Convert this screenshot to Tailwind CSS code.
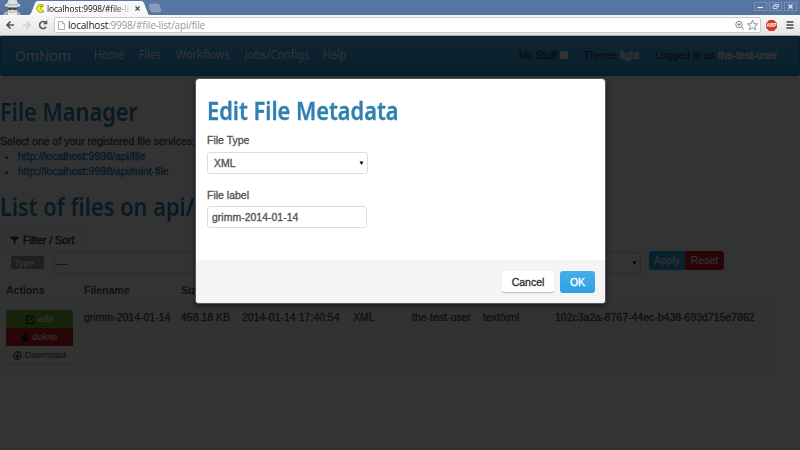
<!DOCTYPE html>
<html lang="en">
<head>
<meta charset="utf-8">
<title>File Manager</title>
<script src="https://cdn.jsdelivr.net/npm/@tailwindcss/browser@4"></script>
</head>
<body class="w-[800px] h-[450px] overflow-hidden bg-white font-['Liberation_Sans',sans-serif] text-[10.5px] leading-[15px] text-[#555]">
<div class="h-full flex flex-col">
  <!-- browser chrome -->
  <header class="h-[36px] shrink-0 flex flex-col bg-linear-to-b from-[#5878a3] to-[#4f6d98]">
    <div class="h-[15px] flex items-stretch shrink-0">
      <svg class="w-[29px] h-[15px] shrink-0" viewBox="0 0 29 15"><path d="M3 15 Q4 11.500 8 11 L17 11 Q20 11.500 21 15Z" fill="#a9afb7"/><path d="M8 2 Q8-1 10 0 L15 0 Q17-1 17.500 3 L20 4.500 Q21 6 19 6.500 Q13 8 6 6.500 Q4 6 5.500 4.500Z" fill="#dcdfe2"/><path d="M7 4.300 Q12 6 18 4.300" fill="none" stroke="#a6abb3"/><path d="M8 7 H17 V11 Q12.500 15 8 11Z" fill="#cfd2d6"/><path d="M7.500 7.500H17.500L16.500 10H13.500L12.500 9L11.500 10H8.500Z" fill="#444"/><path d="M8 12 L12.500 13.500 L17 12 V15 H8Z" fill="#ececec"/></svg>
      <div class="relative w-[120px] h-[15px] shrink-0">
        <svg class="absolute inset-0" width="120" height="15" viewBox="0 0 120 15"><path d="M0 15 Q2 14 3 11 L6 3 Q7 1 9 1 H112 Q114 1 115 3 L118 11 Q119 14 120 15Z" fill="#f8f8f8"/></svg>
        <div class="relative flex items-center h-[15px] pl-[7px] pt-[2px]">
          <svg class="w-[9px] h-[9px] shrink-0" viewBox="0 0 9 9"><path d="M8 1.500 A4.200 4.200 0 1 0 8 7.500 L4.500 4.500Z" fill="#f7ee12" stroke="#85800c" stroke-width=".7"/><circle cx="5" cy="2.300" r=".6" fill="#222"/></svg>
          <span class="ml-[2px] w-[84px] overflow-hidden whitespace-nowrap font-['Open_Sans',sans-serif] text-[8.4px] leading-[11px] tracking-[-0.1px] text-[#111] mask-r-from-80%">localhost:9998/#file-lis</span>
          <svg class="w-[5px] h-[5px] ml-[4px]" viewBox="0 0 5 5"><path d="M.5 .5 L4.500 4.500 M4.500 .5 L.5 4.500" stroke="#444" stroke-width="1.100"/></svg>
        </div>
      </div>
      <svg class="w-[16px] h-[15px]" viewBox="0 0 16 15"><path d="M1 4 H9 Q11 4 11.500 5.500 L13 10.500 Q13 12 11.500 12 H5 Q3 12 2.500 10.500 L0 5Z" transform="translate(-1)" fill="#8599b8" stroke="#a0afc7" stroke-width=".5"/></svg>
      <div class="ml-auto flex gap-[2px] pt-[2px] pr-[3px]">
        <svg width="13" height="9" viewBox="0 0 13 9"><rect x=".5" y=".5" width="12" height="8" fill="none" stroke="#7690b4"/><path d="M3.500 5.500H9" stroke="#eee" stroke-width="1.300"/></svg>
        <svg width="13" height="9" viewBox="0 0 13 9"><rect x=".5" y=".5" width="12" height="8" fill="none" stroke="#7690b4"/><path d="M5.500 4V2.500H9.500V5H8M4 4H8V6.500H4Z" stroke="#e4e8ef" stroke-width=".8" fill="none"/></svg>
        <svg width="13" height="9" viewBox="0 0 13 9"><rect x=".5" y=".5" width="12" height="8" fill="none" stroke="#7690b4"/><path d="M4.500 2.500L8.500 6.500M8.500 2.500L4.500 6.500" stroke="#eee" stroke-width="1.200"/></svg>
      </div>
    </div>
    <div class="h-[21px] flex items-center bg-linear-to-b from-[#f8f8f8] to-[#e4e4e4] border-b border-[#a5a8aa]">
      <svg class="w-[54px] h-[20px] shrink-0" viewBox="0 0 54 20"><path d="M14 10H7.500M10.500 6.500L7 10L10.500 13.500" fill="none" stroke="#555" stroke-width="1.700"/><path d="M23 10H29.500M26.500 6.500L30 10L26.500 13.500" fill="none" stroke="#d2d2d2" stroke-width="1.700"/><path d="M46 12A3.500 3.500 0 1 1 45.500 7.500" fill="none" stroke="#555" stroke-width="1.600"/><path d="M47.300 5V9.300H43Z" fill="#555"/></svg>
      <div class="w-[707px] h-[16px] flex items-center bg-white border border-[#cbcbcb] rounded-[2px] pl-[3px]">
        <svg width="7" height="9" viewBox="0 0 7 9"><path d="M.5 .5H4.300L6.500 2.700V8.500H.5ZM4.300 .5V2.700H6.500" fill="#fafafa" stroke="#999" stroke-width=".8"/></svg>
        <span class="ml-[3px] font-['Open_Sans',sans-serif] text-[10px] leading-[13px] tracking-[-0.2px] text-[#999] whitespace-nowrap"><span class="text-[#222]">localhost</span>:9998/#file-list/api/file</span>
        <svg class="ml-auto" width="26" height="12" viewBox="0 0 26 12"><circle cx="5" cy="5.500" r="3.200" fill="none" stroke="#777" stroke-width=".9"/><path d="M3.500 5.500H6.500M5 4V7M7.500 8L9.500 10.500" stroke="#777" stroke-width="1"/><path d="M18.500 1.200L19.900 4.700L23.500 4.900L20.700 7.200L21.700 10.800L18.500 8.800L15.300 10.800L16.300 7.200L13.500 4.900L17.100 4.700Z" fill="#fff" stroke="#777" stroke-width=".8"/></svg>
      </div>
      <svg class="ml-[5px]" width="11" height="11" viewBox="0 0 11 11"><path d="M3.200 0H7.800L11 3.200V7.800L7.800 11H3.200L0 7.800V3.200Z" fill="#d23a20"/><text x="5.500" y="7.400" text-anchor="middle" font-family="Liberation Sans" font-weight="bold" font-size="4.700" fill="#fff">ABP</text></svg>
      <svg class="ml-[9px]" width="8" height="10" viewBox="0 0 8 10"><path d="M.5 2H7.500M.5 5H7.500M.5 8H7.500" stroke="#444" stroke-width="1.600"/></svg>
    </div>
  </header>

  <!-- page -->
  <div class="relative flex-1">
    <nav class="h-[40px] flex items-center bg-linear-to-b from-[#54b4eb] to-[#1d9ce5] border border-[#1990d5] rounded-[3px] pl-[14px] pr-[22px] pb-[2px] text-white font-['Noto_Sans',sans-serif] text-[12px]">
      <span class="w-[79px] text-[15px] leading-[18px] pb-[1px] scale-x-[.93] origin-left">OmNom</span>
      <span class="w-[45px] pb-[1px] scale-x-[.89] origin-left">Home</span>
      <span class="w-[37px] pb-[1px] scale-x-[.89] origin-left">Files</span>
      <span class="w-[69px] pb-[1px] scale-x-[.91] origin-left">Workflows</span>
      <span class="w-[78px] pb-[1px] scale-x-[.91] origin-left">Jobs/Configs</span>
      <span class="pb-[1px] scale-x-[.89] origin-left">Help</span>
      <div class="ml-auto flex gap-[16px] font-['Liberation_Sans',sans-serif] text-[10.5px] text-[#333] [-webkit-text-stroke:0.2px]">
        <span class="flex items-center">My Stuff<i class="w-[8px] h-[8px] ml-[3px] bg-white rounded-[1px]"></i></span>
        <span>Theme <span class="text-white [-webkit-text-stroke:0.5px]">light</span></span>
        <span>Logged in as <span class="text-white [-webkit-text-stroke:0.5px]">the-test-user</span></span>
      </div>
    </nav>
    <h1 class="mt-[19px] h-[32px] leading-[32px] font-['Noto_Sans',sans-serif] font-semibold text-[25px] text-[#2f80b0] whitespace-nowrap"><span class="inline-block scale-x-[.872] origin-left">File Manager</span></h1>
    <p class="mt-[7px] [-webkit-text-stroke:0.35px]">Select one of your registered file services:</p>
    <ul class="list-disc pl-[18px] text-[#2f80b0] marker:text-[#555] [-webkit-text-stroke:0.35px]"><li>http://localhost:9998/api/file</li><li>http://localhost:9998/api/mint-file</li></ul>
    <h1 class="mt-[11px] h-[32px] leading-[32px] font-['Noto_Sans',sans-serif] font-semibold text-[25px] text-[#2f80b0] whitespace-nowrap"><span class="inline-block scale-x-[.872] origin-left">List of files on api/</span></h1>
    <div class="mt-[7px] ml-[1px] w-[82px] h-[22px] flex items-center gap-[4px] pl-[8px] border border-[#e4e4e4] rounded-[3px] text-[#333]">
      <svg width="9" height="9" viewBox="0 0 9 9"><path d="M0.500 .5H8.500V2L5.500 4.500V8.500L3.500 7V4.500L.5 2Z" fill="#444"/></svg>
      <span class="pt-[1px] [-webkit-text-stroke:0.4px] whitespace-nowrap">Filter / Sort</span>
    </div>
    <div class="flex h-[24px]">
      <div class="w-[33px] h-[13px] mt-[5px] ml-[11px] bg-[#999] rounded-[2px] text-white text-[9px] leading-[14px] font-bold pl-[3px]">Type</div>
      <div class="ml-[10px] mt-[1px] w-[587px] h-[22px] flex items-center border border-[#ccc] rounded-[3px] px-[2px] text-[#555] [-webkit-text-stroke:0.4px]">—<svg class="ml-auto mr-[1px]" width="5" height="5" viewBox="0 0 5 5"><path d="M.5 .5H4.500L2.500 4Z" fill="#000"/></svg></div>
      <div class="flex ml-[8px] h-[19px] rounded-[3px] overflow-hidden text-white leading-[19px] text-center"><span class="w-[36px] bg-[#2fa4e7]">Apply</span><span class="w-[39px] bg-[#c71c22]">Reset</span></div>
    </div>
    <div class="w-[772px]">
      <div class="flex h-[28px] pt-[8px] pl-[6px] font-bold text-[#555]"><span class="w-[78px]">Actions</span><span class="w-[97px]">Filename</span><span>Size</span></div>
      <div class="flex h-[66px] bg-[#f9f9f9] border-t border-r border-[#e4e4e4] pt-[6px] pl-[6px] [-webkit-text-stroke:0.35px]">
        <div class="w-[67px] h-[55px] mr-[11px] rounded-[3px] overflow-hidden border-b border-[#ccc] text-white text-[9.3px] [-webkit-text-stroke:0.1px]">
          <div class="h-[18px] flex items-center justify-center gap-[3px] bg-[#73a839]"><svg width="9" height="9" viewBox="0 0 9 9"><path d="M5 1H1.500Q.5 1 .5 2V7.500Q.5 8.500 1.500 8.500H7Q8 8.500 8 7.500V5.500M3.500 5.500L8 1" stroke="#222" stroke-width="1.300" fill="none"/></svg>edit</div>
          <div class="h-[18px] flex items-center justify-center gap-[3px] bg-[#c71c22]"><svg width="8" height="9" viewBox="0 0 8 9"><path d="M0 1.500H2.500V0H5.500V1.500H8V2.500H0ZM.8 3H7.200V9H.8Z" fill="#222"/></svg>delete</div>
          <div class="h-[18px] flex items-center justify-center gap-[3px] bg-white text-[#555]"><svg width="9" height="9" viewBox="0 0 9 9"><circle cx="4.500" cy="4.500" r="3.800" fill="none" stroke="#333" stroke-width="1.100"/><path d="M4.500 2V6M2.500 4.500L4.500 6.700L6.500 4.500" stroke="#333" stroke-width="1.200" fill="none"/></svg>Download</div>
        </div>
        <span class="w-[97px]">grimm-2014-01-14</span><span class="w-[61px]">458.18 KB</span><span class="w-[111px]">2014-01-14 17:40:54</span><span class="w-[59px]">XML</span><span class="w-[71px]">the-test-user</span><span class="w-[72px]">text/xml</span><span>102c3a2a-8767-44ec-b438-693d715e7862</span>
      </div>
    </div>
    <div class="absolute inset-0 bg-black/80"></div>
  </div>
</div>

<!-- dialog -->
<section class="absolute left-[195px] top-[78px] w-[411px] h-[226px] flex flex-col overflow-hidden rounded-[4px] bg-white border border-[#555] shadow-[0_2px_5px_rgba(0,0,0,.5)] [-webkit-text-stroke:0.35px]">
  <div class="flex-1 pl-[11px] pt-[15px]">
    <h1 class="h-[32px] leading-[32px] font-['Noto_Sans',sans-serif] font-semibold text-[25px] text-[#2f80b0] whitespace-nowrap"><span class="inline-block scale-x-[.872] origin-left">Edit File Metadata</span></h1>
    <p class="mt-[7px]">File Type</p>
    <div class="mt-[4px] w-[161px] h-[22px] flex items-center border border-[#ddd] rounded-[3px] pl-[6px] pr-[3px]">XML<svg class="ml-auto" width="5" height="5" viewBox="0 0 5 5"><path d="M.5 .5H4.500L2.500 4Z" fill="#000"/></svg></div>
    <p class="mt-[14px]">File label</p>
    <div class="mt-[3px] w-[160px] h-[22px] flex items-center border border-[#ddd] rounded-[3px] pl-[4px]">grimm-2014-01-14</div>
  </div>
  <footer class="h-[43px] bg-[#f4f4f4] flex justify-end gap-[6px] pt-[11px] pr-[10px] text-center leading-[22px]">
    <span class="w-[52px] h-[21px] bg-white rounded-[2px] shadow-[0_1px_1px_#bbb] text-[#333]">Cancel</span>
    <span class="w-[35px] h-[22px] bg-linear-to-b from-[#45aeea] to-[#2fa0e2] rounded-[3px] text-white">OK</span>
  </footer>
</section>
</body>
</html>
